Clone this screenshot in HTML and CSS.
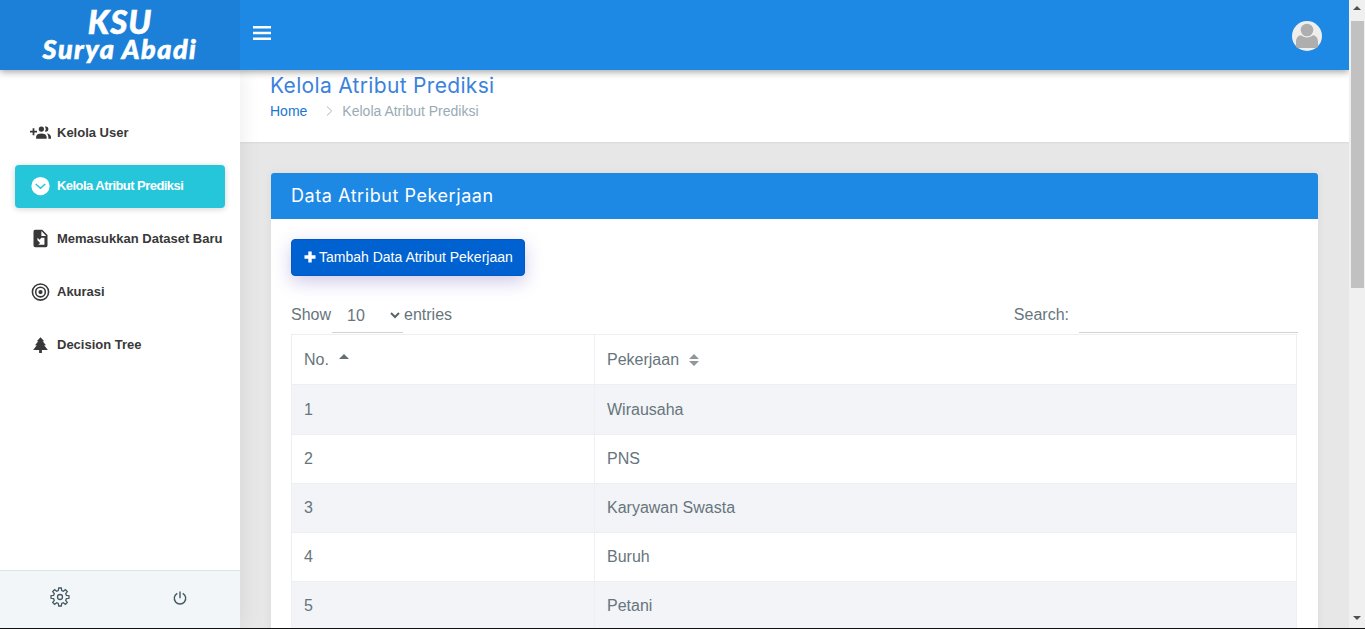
FILE: index.html
```html
<!DOCTYPE html>
<html lang="id">
<head>
<meta charset="utf-8">
<title>Kelola Atribut Prediksi</title>
<link rel="stylesheet" href="styles.css">
</head>
<body>
<div class="window">
  <div class="app">
    <header class="topbar">
      <div class="brand"><span class="brand-top">KSU</span><span class="brand-name">Surya Abadi</span></div>
      <div class="bar">
        <svg class="burger" viewBox="0 0 18 14"><path d="M0 0h18v2.500H0zM0 5.750h18v2.500H0zM0 11.500h18V14H0z"/></svg>
        <svg class="avatar" viewBox="0 0 30 30"><circle cx="15" cy="15" r="15" fill="#eee"/><circle cx="15" cy="9" r="6.300" fill="#aeaeae"/><path d="M4 25v-4c0-4 2-6.500 5-6.700 3.500 2.800 8.500 2.800 12 0 3 .2 5 2.700 5 6.700v4q0 2-2 2H6q-2 0-2-2z" fill="#aeaeae"/></svg>
      </div>
    </header>
    <div class="body">
      <aside class="side">
        <nav class="menu">
          <a class="item"><svg class="ico" viewBox="0 0 24 24"><path d="M19 17v2H7v-2s0-4 6-4 6 4 6 4M16 8a3 3 0 1 0-6 0 3 3 0 0 0 6 0M19.200 13.060A5.600 5.600 0 0 1 21 17v2h3v-2s0-3.450-4.800-3.940M18 5c-.31 0-.61.050-.890.140a5 5 0 0 1 0 5.720c.28.090.58.140.89.140a3 3 0 0 0 0-6M8 10H5V7H3v3H0v2h3v3h2v-3h3z"/></svg><span>Kelola User</span></a>
          <a class="item active"><svg class="ico" viewBox="0 0 20 20"><circle cx="10" cy="10.500" r="8.700"/><path d="M5.500 8.500l4.500 4.200 4.500-4.200" fill="none" stroke="#26c6da" stroke-width="1.300"/></svg><span>Kelola Atribut Prediksi</span></a>
          <a class="item wide"><svg class="ico" viewBox="0 0 24 24"><path d="M14 2H6a2 2 0 0 0-2 2v16a2 2 0 0 0 2 2h12a2 2 0 0 0 2-2V8zM13 9V3.500L18.500 9zM8.500 11l2.500 2.500 2-2.500h3.500v8H9.500l2-2-3-3z" fill-rule="evenodd"/></svg><span>Memasukkan Dataset Baru</span></a>
          <a class="item"><svg class="ico" viewBox="0 0 20 20"><g fill="none" stroke="currentColor" stroke-width="1.500"><circle cx="10" cy="10.500" r="7.700"/><circle cx="10" cy="10.500" r="4.600"/></g><circle cx="10" cy="10.500" r="2"/></svg><span>Akurasi</span></a>
          <a class="item"><svg class="ico" viewBox="0 0 20 20"><path d="M10 3L6.500 7h1.400L4.800 10.700h1.700L3 15.200h5.700V18h2.600v-2.800H17l-3.500-4.500h1.700L12.100 7h1.400z"/></svg><span>Decision Tree</span></a>
        </nav>
        <div class="side-foot">
          <div class="foot-cell"><svg class="gear" viewBox="0 0 20 20"><path d="M8.700 1h2.600l.4 2.600 1.600.7 2.100-1.600 1.900 1.900-1.600 2.100.7 1.600 2.600.4v2.600l-2.600.4-.7 1.600 1.600 2.100-1.900 1.900-2.100-1.600-1.600.7-.4 2.600H8.700l-.4-2.600-1.600-.7-2.100 1.600-1.900-1.900 1.600-2.100-.7-1.600L1 11.300V8.700l2.600-.4.7-1.600-1.600-2.100 1.900-1.900 2.100 1.600 1.600-.7z"/><circle cx="10" cy="10" r="2.500"/></svg></div>
          <div class="foot-cell"><svg class="power" viewBox="0 0 14 14"><path d="M4.300 2.300a5.700 5.700 0 1 0 5.400 0M7 .5v6.700"/></svg></div>
        </div>
      </aside>
      <main class="page">
        <div class="titles">
          <h3 class="page-title">Kelola Atribut Prediksi</h3>
          <div class="crumbs"><a class="home">Home</a><svg class="chev" viewBox="0 0 7 10"><path d="M1 .5L5.700 5 1 9.500"/></svg><span>Kelola Atribut Prediksi</span></div>
        </div>
        <section class="card">
          <h4 class="card-head">Data Atribut Pekerjaan</h4>
          <div class="card-body">
            <button class="add"><svg class="plus" viewBox="0 0 12 12"><path d="M4.300.5h3.400v3.800h3.800v3.400H7.700v3.800H4.300V7.700H.5V4.300h3.800z"/></svg><span>Tambah Data Atribut Pekerjaan</span></button>
            <div class="tools">
              <div class="length"><span>Show</span><div class="select"><span>10</span><svg class="down" viewBox="0 0 10 7"><path d="M1 1l4 4 4-4"/></svg></div><span>entries</span></div>
              <div class="search"><span>Search:</span><div class="field"></div></div>
            </div>
            <table class="data">
              <thead><tr><th class="num">No.<svg class="sort" viewBox="0 0 10 14"><path d="M0 6l5-5 5 5z"/></svg></th><th>Pekerjaan<svg class="sort both" viewBox="0 0 10 14"><path d="M0 6l5-5 5 5zM0 8h10l-5 5z"/></svg></th></tr></thead>
              <tbody>
                <tr class="first"><td>1</td><td>Wirausaha</td></tr>
                <tr><td>2</td><td>PNS</td></tr>
                <tr><td>3</td><td>Karyawan Swasta</td></tr>
                <tr><td>4</td><td>Buruh</td></tr>
                <tr><td>5</td><td>Petani</td></tr>
              </tbody>
            </table>
          </div>
        </section>
      </main>
    </div>
  </div>
  <div class="scroll"><svg class="arrow" viewBox="0 0 8 5"><path d="M0 5l4-4 4 4z"/></svg><div class="thumb"></div><svg class="arrow" viewBox="0 0 8 5"><path d="M0 0l4 4 4-4z"/></svg></div>
</div>
</body>
</html>
```
FILE: styles.css
```css
* { box-sizing: border-box; }
body { margin: 0; height: 629px; overflow: hidden; font-family: "Liberation Sans", Arial, sans-serif; color: #67757c; background: #fff; }
.window { display: flex; height: 629px; border-bottom: 1px solid #111; }
.app { width: 1349px; height: 628px; display: flex; flex-direction: column; overflow: hidden; }
.topbar { display: flex; flex: 0 0 70px; background: #1e88e5; box-shadow: 0 2px 7px rgba(0,0,0,.36); position: relative; z-index: 3; }
.brand { width: 240px; background: #1d80d8; color: #fff; display: flex; flex-direction: column; align-items: center; padding-top: 8px; font-family: Lato, sans-serif; font-weight: 900; font-style: italic; -webkit-text-stroke: .6px #fff; }
.brand-top { font-size: 33px; line-height: 27px; letter-spacing: 1px; }
.brand-name { font-size: 27px; line-height: 28px; letter-spacing: 1.500px; }
.bar { flex: 1; display: flex; justify-content: space-between; padding: 21px 27px 0 13px; }
.burger { width: 18px; height: 14px; margin-top: 5px; fill: #fff; }
.avatar { width: 30px; height: 30px; }
.body { display: flex; flex: 1; min-height: 0; }
.side { width: 240px; background: #fff; box-shadow: 1px 0 20px rgba(0,0,0,.08); display: flex; flex-direction: column; justify-content: space-between; position: relative; z-index: 2; }
.menu { padding: 42px 15px 0; display: flex; flex-direction: column; gap: 10px; }
.item { height: 43px; display: flex; align-items: center; gap: 6px; padding: 0 0 2px 15px; border-radius: 4px; font-size: 13px; font-weight: 700; color: #383838; letter-spacing: 0; white-space: nowrap; }
.item span { line-height: 16px; }
.ico { width: 21px; height: 21px; flex: none; fill: currentColor; }
.active { background: #26c6da; color: #fff; box-shadow: 0 1px 6px rgba(0,0,0,.18); letter-spacing: -.55px; }
.side-foot { height: 58px; background: #f2f6f8; border-top: 1px solid #dce5e8; display: flex; }
.foot-cell { flex: 1; display: flex; justify-content: center; align-items: center; padding-bottom: 5px; }
.gear { width: 20px; height: 20px; fill: none; stroke: #455a64; stroke-width: 1.3; }
.power { width: 14px; height: 14px; fill: none; stroke: #455a64; stroke-width: 1.4; margin-top: 2px; }
.page { flex: 1; background: #e7e7e7; }
.titles { height: 72px; background: #fff; padding: 0 30px; box-shadow: 0 1px 2px rgba(0,0,0,.06); }
.page-title { margin: 0; padding-top: 2px; font: 400 21px/28px Inter, sans-serif; color: #3b82dc; letter-spacing: .32px; }
.crumbs { display: flex; align-items: center; font-size: 14px; line-height: 20px; padding-top: 1px; color: #99abb4; }
.home { color: #1976d2; }
.chev { width: 7px; height: 10px; margin: 0 9px 0 19px; fill: none; stroke: #a6b7bf; }
.card { margin: 31px 31px 0; background: #fff; border-radius: 3px; box-shadow: 0 0 10px rgba(0,0,0,.06); height: 520px; }
.card-head { margin: 0; height: 46px; background: #1e88e5; border-radius: 3px 3px 0 0; padding-left: 20px; font: 400 18px/46px Inter, sans-serif; letter-spacing: .56px; color: #fff; }
.card-body { padding: 20px 20px 0; }
.add { display: flex; align-items: center; gap: 3px; width: 234px; height: 37px; padding: 0 0 2px 12px; border: 1px solid #0059c4; border-radius: 4px; background: #0062d1; color: #fff; font: 14px "Liberation Sans", Arial, sans-serif; box-shadow: 0 6px 18px rgba(85,60,180,.27); white-space: nowrap; }
.plus { width: 12px; height: 12px; fill: #fff; flex: none; }
.tools { display: flex; justify-content: space-between; margin: 19px 0 1px; height: 38px; font-size: 16px; line-height: 40px; }
.length { display: flex; }
.select { width: 71px; height: 38px; border-bottom: 1px solid #d2d2d2; display: flex; align-items: center; justify-content: space-between; padding: 4px 3px 0 15px; margin: 0 1px; }
.down { width: 10px; height: 7px; fill: none; stroke: #59656b; stroke-width: 2; }
.search { display: flex; }
.field { width: 219px; margin-left: 10px; border-bottom: 1px solid #d2d2d2; }
.data { width: 1006px; border-collapse: separate; border-spacing: 0; table-layout: fixed; font-size: 16px; border: solid #efefef; border-width: 1px 1px 0 0; }
th, td { text-align: left; font-weight: 400; height: 49px; padding: 0 12px; border-left: 1px solid #eeeff2; border-bottom: 1px solid #eeeff2; }
th { height: 50px; }
.first td { height: 50px; padding-top: 1px; }
.num { width: 303px; }
tbody tr:nth-child(odd) { background: #f2f4f8; }
.sort { width: 10px; height: 14px; margin-left: 10px; fill: #646e73; vertical-align: -2px; }
.both { fill: #919699; }
.scroll { width: 16px; background: #f0f0f0; display: flex; flex-direction: column; align-items: center; padding: 5px 0 7px; }
.arrow { width: 8px; height: 5px; fill: #505050; }
.thumb { width: 13px; height: 267px; background: #c1c1c1; margin: 11px 0 auto 1px; }
```
